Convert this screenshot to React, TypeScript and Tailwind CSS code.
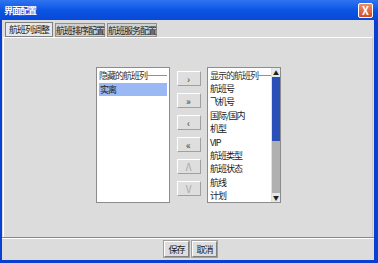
import React from "react";

const font = { fontFamily: '"Noto Sans CJK SC", "Noto Sans", sans-serif' };

function ArrowBtn({ label, disabled }: { label: string; disabled?: boolean }) {
  return (
    <div
      className={`w-[24px] h-[15px] flex items-center justify-center text-[10px] leading-none border border-t-[#ffffff] border-l-[#ffffff] border-b-[#a0a0a0] border-r-[#a0a0a0] bg-[#dedede] ${disabled ? "text-[#a8a8a8]" : "text-[#404040]"}`}
    >
      {label}
    </div>
  );
}

export default function App() {
  const shown = ["航班号", "飞机号", "国际/国内", "机型", "VIP", "航班类型", "航班状态", "航线", "计划"];
  return (
    <div className="w-[378px] h-[263px] bg-[#0b3fd0] flex flex-col overflow-hidden" style={font}>
      {/* title bar */}
      <div className="h-[20px] flex items-center justify-between pl-[4px] pr-[5px] bg-gradient-to-b from-[#2f74f0] via-[#0c55e4] to-[#0848d8]">
        <span className="text-[9px] font-bold text-white leading-none tracking-[-1px] whitespace-nowrap">界面配置</span>
        <div className="w-[15px] h-[15px] rounded-[2px] border border-white bg-gradient-to-b from-[#f08a6a] to-[#d34a24] flex items-center justify-center text-white text-[11px] font-bold leading-none">
          X
        </div>
      </div>
      {/* body */}
      <div className="flex-1 ml-[2px] mr-[4px] mb-[3px] bg-[#dcdcdc] flex flex-col">
        <div className="flex items-end gap-[2px] pl-[3px] pt-[2px] h-[17px]">
          <div className="h-[15px] px-[3px] flex items-center text-[9px] leading-none text-[#202020] bg-[#e8e8e8] border border-[#808080] tracking-[-1px] whitespace-nowrap">航班列调整</div>
          <div className="h-[14px] px-0 flex items-center text-[9px] leading-none text-[#202020] bg-[#d0d0d0] border border-[#909090] tracking-[-1px] whitespace-nowrap">航班排序配置</div>
          <div className="h-[14px] px-0 flex items-center text-[9px] leading-none text-[#202020] bg-[#d0d0d0] border border-[#909090] tracking-[-1px] whitespace-nowrap">航班服务配置</div>
        </div>
        <div className="mx-[1px] h-[200px] border-t border-[#ffffff] border-l border-r border-r-[#c8c8c8] flex pt-[29px] pl-[92px]">
          {/* left list */}
          <div className="w-[74px] h-[136px] bg-white border border-[#8c8c8c] pl-[2px] pr-[2px] pt-[1px]">
            <div className="flex items-center h-[13px]">
              <span className="text-[9px] leading-none text-[#303030] whitespace-nowrap tracking-[-1px]">隐藏的航班列</span>
              <div className="flex-1 border-t border-[#909090]" />
            </div>
            <div className="h-[13px] mt-[1px] bg-[#9ab8f4] text-[9px] leading-[13px] text-[#202020] pl-[1px] tracking-[-1px]">实离</div>
          </div>
          {/* buttons */}
          <div className="w-[37px] flex flex-col items-center pt-[4px] gap-[7px]">
            <ArrowBtn label="›" />
            <ArrowBtn label="»" />
            <ArrowBtn label="‹" />
            <ArrowBtn label="«" />
            <ArrowBtn label="Λ" disabled />
            <ArrowBtn label="V" disabled />
          </div>
          {/* right list */}
          <div className="w-[74px] h-[136px] bg-white border border-[#8c8c8c] flex overflow-hidden">
            <div className="flex-1 pl-[2px] pt-[1px] overflow-hidden">
              <div className="flex items-center h-[13px]">
                <span className="text-[9px] leading-none text-[#303030] whitespace-nowrap tracking-[-1px]">显示的航班列</span>
                <div className="flex-1 border-t border-[#909090]" />
              </div>
              {shown.map((s) => (
                <div key={s} className="h-[13.4px] text-[9px] leading-[13.4px] text-[#202020] whitespace-nowrap tracking-[-1px]">
                  {s}
                </div>
              ))}
            </div>
            <div className="w-[9px] flex flex-col bg-[#c8c8c8] border-l border-[#e0e0e0]">
              <div className="h-[9px] bg-[#e8e8e8] flex items-center justify-center text-[6px] leading-none text-[#202020]">▲</div>
              <div className="h-[64px] bg-[#2a4fb8]" />
              <div className="flex-1 bg-[#b0b0b0]" />
              <div className="h-[9px] bg-[#e8e8e8] flex items-center justify-center text-[6px] leading-none text-[#202020]">▼</div>
            </div>
          </div>
        </div>
        <div className="border-t border-[#888888] border-b border-b-white" />
        <div className="flex-1 flex items-start justify-center gap-[3px] pt-[2px] pl-[5px]">
          <div className="w-[25px] h-[16px] flex items-center justify-center text-[9px] leading-none text-[#202020] bg-[#dedede] border border-t-white border-l-white border-b-[#808080] border-r-[#808080] outline outline-1 outline-[#a0a0a0] tracking-[-1px] whitespace-nowrap">保存</div>
          <div className="w-[25px] h-[16px] flex items-center justify-center text-[9px] leading-none text-[#202020] bg-[#dedede] border border-t-white border-l-white border-b-[#808080] border-r-[#808080] outline outline-1 outline-[#a0a0a0] tracking-[-1px] whitespace-nowrap">取消</div>
        </div>
      </div>
    </div>
  );
}
